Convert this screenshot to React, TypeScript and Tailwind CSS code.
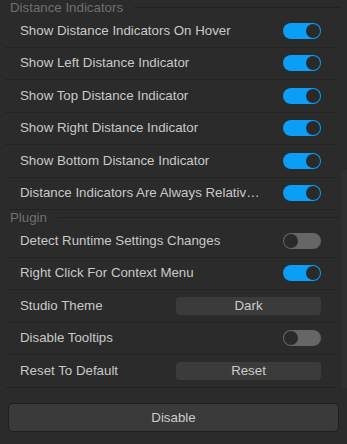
import { ReactNode } from 'react';

type Row =
  | { label: string; kind: 'toggle'; on: boolean }
  | { label: string; kind: 'button'; text: string };

const distanceRows: Row[] = [
  { label: 'Show Distance Indicators On Hover', kind: 'toggle', on: true },
  { label: 'Show Left Distance Indicator', kind: 'toggle', on: true },
  { label: 'Show Top Distance Indicator', kind: 'toggle', on: true },
  { label: 'Show Right Distance Indicator', kind: 'toggle', on: true },
  { label: 'Show Bottom Distance Indicator', kind: 'toggle', on: true },
  { label: 'Distance Indicators Are Always Relative To Parent', kind: 'toggle', on: true },
];

const pluginRows: Row[] = [
  { label: 'Detect Runtime Settings Changes', kind: 'toggle', on: false },
  { label: 'Right Click For Context Menu', kind: 'toggle', on: true },
  { label: 'Studio Theme', kind: 'button', text: 'Dark' },
  { label: 'Disable Tooltips', kind: 'toggle', on: false },
  { label: 'Reset To Default', kind: 'button', text: 'Reset' },
];

function Toggle({ on }: { on: boolean }) {
  return (
    <div
      className={`w-[38px] h-[16px] rounded-full flex items-center px-[1px] shrink-0 ${
        on ? 'bg-[#0a9ef7] justify-end' : 'bg-[#666666] justify-start'
      }`}
    >
      <div className="w-[14px] h-[14px] rounded-full bg-[#2a2a2a]" />
    </div>
  );
}

function SectionHeader({ children }: { children: ReactNode }) {
  return (
    <div className="h-[15px] flex items-center pl-[10px] pr-[1px] gap-[11px]">
      <span className="text-[13.3px] leading-none text-[#6f6f6f] whitespace-nowrap">{children}</span>
      <div className="flex-1 h-px bg-[#222222]" />
    </div>
  );
}

function SettingRow({ row }: { row: Row }) {
  return (
    <div className="h-[32.5px] mx-[5px] pl-[15px] pr-[15px] flex items-center border-b border-[#232323]">
      <span className="flex-1 min-w-0 truncate pr-[22px] text-[13.3px] text-[#c9c9c9]">{row.label}</span>
      {row.kind === 'toggle' ? (
        <Toggle on={row.on} />
      ) : (
        <div className="w-[145px] h-[18px] rounded-[4px] bg-[#3b3b3b] flex items-center justify-center text-[13.3px] text-[#cccccc] shrink-0">
          {row.text}
        </div>
      )}
    </div>
  );
}

export default function App() {
  return (
    <div
      className="w-[347px] h-[444px] bg-[#2b2b2b] flex flex-col overflow-hidden"
      style={{ fontFamily: '"Liberation Sans", Arial, sans-serif' }}
    >
      <div className="h-[388px] flex overflow-hidden shrink-0">
        <div className="flex-1 min-w-0">
          <SectionHeader>Distance Indicators</SectionHeader>
          {distanceRows.map((r) => (
            <SettingRow key={r.label} row={r} />
          ))}
          <SectionHeader>Plugin</SectionHeader>
          {pluginRows.map((r) => (
            <SettingRow key={r.label} row={r} />
          ))}
        </div>
        <div className="w-[6px] flex flex-col">
          <div className="h-[170px]" />
          <div className="flex-1 bg-[#303030]" />
        </div>
      </div>
      <div className="px-[8px] pt-[15px]">
        <div className="h-[29px] rounded-[5px] bg-[#3a3a3a] border border-[#1f1f1f] flex items-center justify-center text-[13.3px] text-[#cccccc]">
          Disable
        </div>
      </div>
    </div>
  );
}
